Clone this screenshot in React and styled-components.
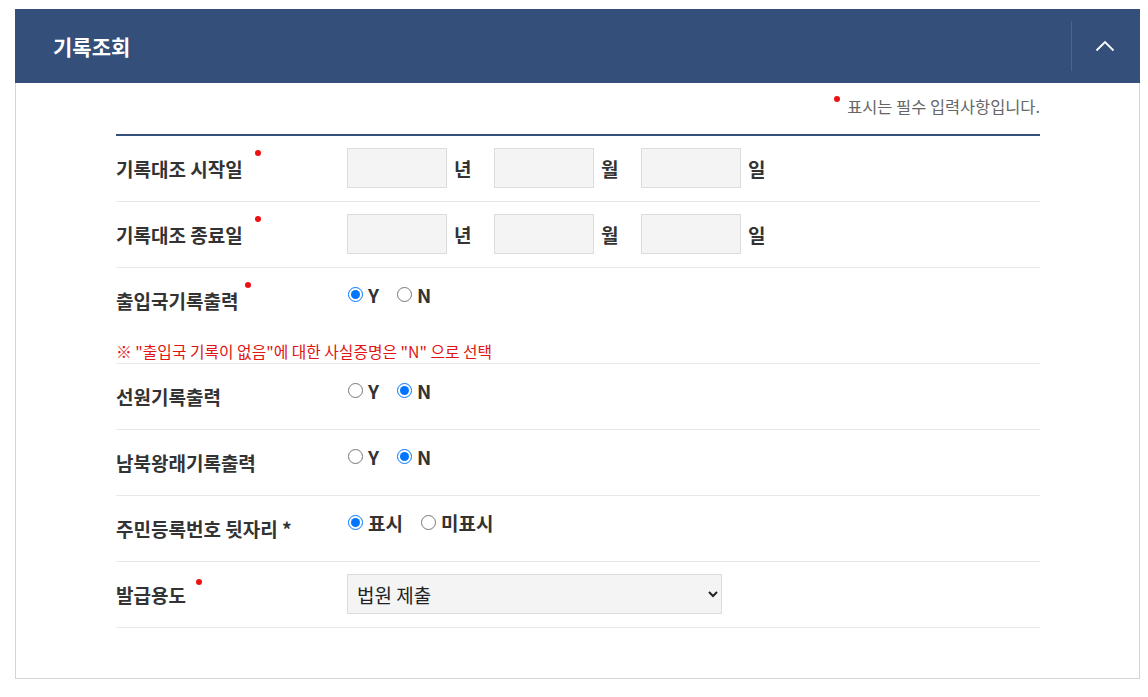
import React from 'react';
import styled, { createGlobalStyle } from 'styled-components';

const GlobalStyle = createGlobalStyle`
  body {
    margin: 0;
    background: #fff;
    font-family: "Noto Sans CJK KR", "Noto Sans", sans-serif;
    color: #333;
  }
`;

const Page = styled.div`
  padding: 9px 8px 0 15px;
`;

const Panel = styled.section`
  border: 1px solid #d5d5d5;
  border-top: none;
`;

const Header = styled.header`
  display: flex;
  align-items: center;
  height: 74px;
  margin: 0 -1px;
  background: #344f7a;
`;

const Title = styled.h2`
  flex: 1;
  margin: 0;
  padding-left: 38px;
  font-size: 21px;
  font-weight: 700;
  color: #fff;
`;

const ToggleButton = styled.button`
  display: flex;
  align-items: center;
  justify-content: center;
  width: 69px;
  height: 50px;
  padding: 0 3px 0 0;
  border: none;
  border-left: 1px solid #4b6390;
  background: transparent;
  cursor: pointer;
`;

const Body = styled.div`
  padding: 12px 99px 50px 100px;
`;

const RequiredNote = styled.p`
  display: flex;
  justify-content: flex-end;
  margin: 0;
  font-size: 16.4px;
  line-height: 22px;
  color: #666;
`;

const Dot = styled.span`
  position: relative;
  display: inline-block;
  width: ${(p) => (p.$inline ? '13px' : '0')};
  &::before {
    content: '';
    position: absolute;
    left: ${(p) => p.$x || 0}px;
    top: ${(p) => p.$y || 0}px;
    width: 6px;
    height: 6px;
    border-radius: 50%;
    background: #ee1111;
  }
`;

const Form = styled.div`
  margin-top: 17px;
  border-top: 2px solid #344f7a;
`;

const Row = styled.div`
  display: grid;
  grid-template-columns: 231px 1fr;
  align-items: center;
  padding: 12px 0 13px;
  border-bottom: 1px solid #e8e8e8;
`;

const Label = styled.div`
  font-size: 19px;
  font-weight: 700;
  color: #333;
`;

const Field = styled.div`
  display: flex;
  align-items: center;
  min-height: 40px;
  padding-bottom: ${(p) => (p.$raised ? '6px' : '0')};
  margin-top: ${(p) => (p.$raised ? '-6px' : '0')};
`;

const DateInput = styled.input`
  box-sizing: border-box;
  width: 100px;
  height: 40px;
  border: 1px solid #dcdcdc;
  background: #f4f4f4;
`;

const Unit = styled.span`
  flex: 0 0 40px;
  margin-left: 7px;
  font-size: 19px;
  font-weight: 700;
  color: #333;
`;

const RadioLabel = styled.label`
  display: inline-flex;
  align-items: center;
  margin-right: 17px;
  font-size: 19px;
  font-weight: 700;
  color: #333;
  cursor: pointer;

  input {
    margin: 0 5px 0 1px;
    width: 15px;
    height: 15px;
  }
`;

const Notice = styled.div`
  grid-column: 1 / -1;
  margin-top: 22px;
  margin-bottom: -12px;
  font-size: 15.8px;
  line-height: 20px;
  color: #e01414;
`;

const SelectBox = styled.select`
  box-sizing: border-box;
  width: 375px;
  height: 40px;
  padding: 0 6px 0 5px;
  border: 1px solid #dcdcdc;
  border-radius: 0;
  background: #f4f4f4;
  font-family: inherit;
  font-size: 19px;
  color: #222;
`;

function Chevron() {
  return (
    <svg width="20" height="12" viewBox="0 0 20 12" fill="none">
      <path d="M1.5 10.5 L10 2 L18.5 10.5" stroke="#fff" strokeWidth="1.8" />
    </svg>
  );
}

function DateRow({ label }) {
  return (
    <Row>
      <Label>
        {label}
        <Dot $x={12} $y={-27} />
      </Label>
      <Field>
        <DateInput type="text" />
        <Unit>년</Unit>
        <DateInput type="text" />
        <Unit>월</Unit>
        <DateInput type="text" />
        <Unit>일</Unit>
      </Field>
    </Row>
  );
}

function RadioRow({ label, name, options, value, dot, children }) {
  return (
    <Row>
      <Label>
        {label}
        {dot && <Dot $x={dot} $y={-27} />}
      </Label>
      <Field $raised>
        {options.map((opt) => (
          <RadioLabel key={opt}>
            <input type="radio" name={name} defaultChecked={opt === value} />
            {opt}
          </RadioLabel>
        ))}
      </Field>
      {children}
    </Row>
  );
}

export default function App() {
  return (
    <>
      <GlobalStyle />
      <Page>
        <Panel>
          <Header>
            <Title>기록조회</Title>
            <ToggleButton aria-label="접기">
              <Chevron />
            </ToggleButton>
          </Header>
          <Body>
            <RequiredNote>
              <Dot $inline $x={0} $y={1} />
              표시는 필수 입력사항입니다.
            </RequiredNote>
            <Form>
              <DateRow label="기록대조 시작일" />
              <DateRow label="기록대조 종료일" />
              <RadioRow label="출입국기록출력" name="entry" options={['Y', 'N']} value="Y" dot={7}>
                <Notice>※ "출입국 기록이 없음"에 대한 사실증명은 "N" 으로 선택</Notice>
              </RadioRow>
              <RadioRow label="선원기록출력" name="crew" options={['Y', 'N']} value="N" />
              <RadioRow label="남북왕래기록출력" name="nk" options={['Y', 'N']} value="N" />
              <RadioRow label="주민등록번호 뒷자리 *" name="rrn" options={['표시', '미표시']} value="표시" />
              <Row>
                <Label>
                  발급용도
                  <Dot $x={10} $y={-24} />
                </Label>
                <Field>
                  <SelectBox defaultValue="court">
                    <option value="court">법원 제출</option>
                    <option value="etc">기타</option>
                  </SelectBox>
                </Field>
              </Row>
            </Form>
          </Body>
        </Panel>
      </Page>
    </>
  );
}
